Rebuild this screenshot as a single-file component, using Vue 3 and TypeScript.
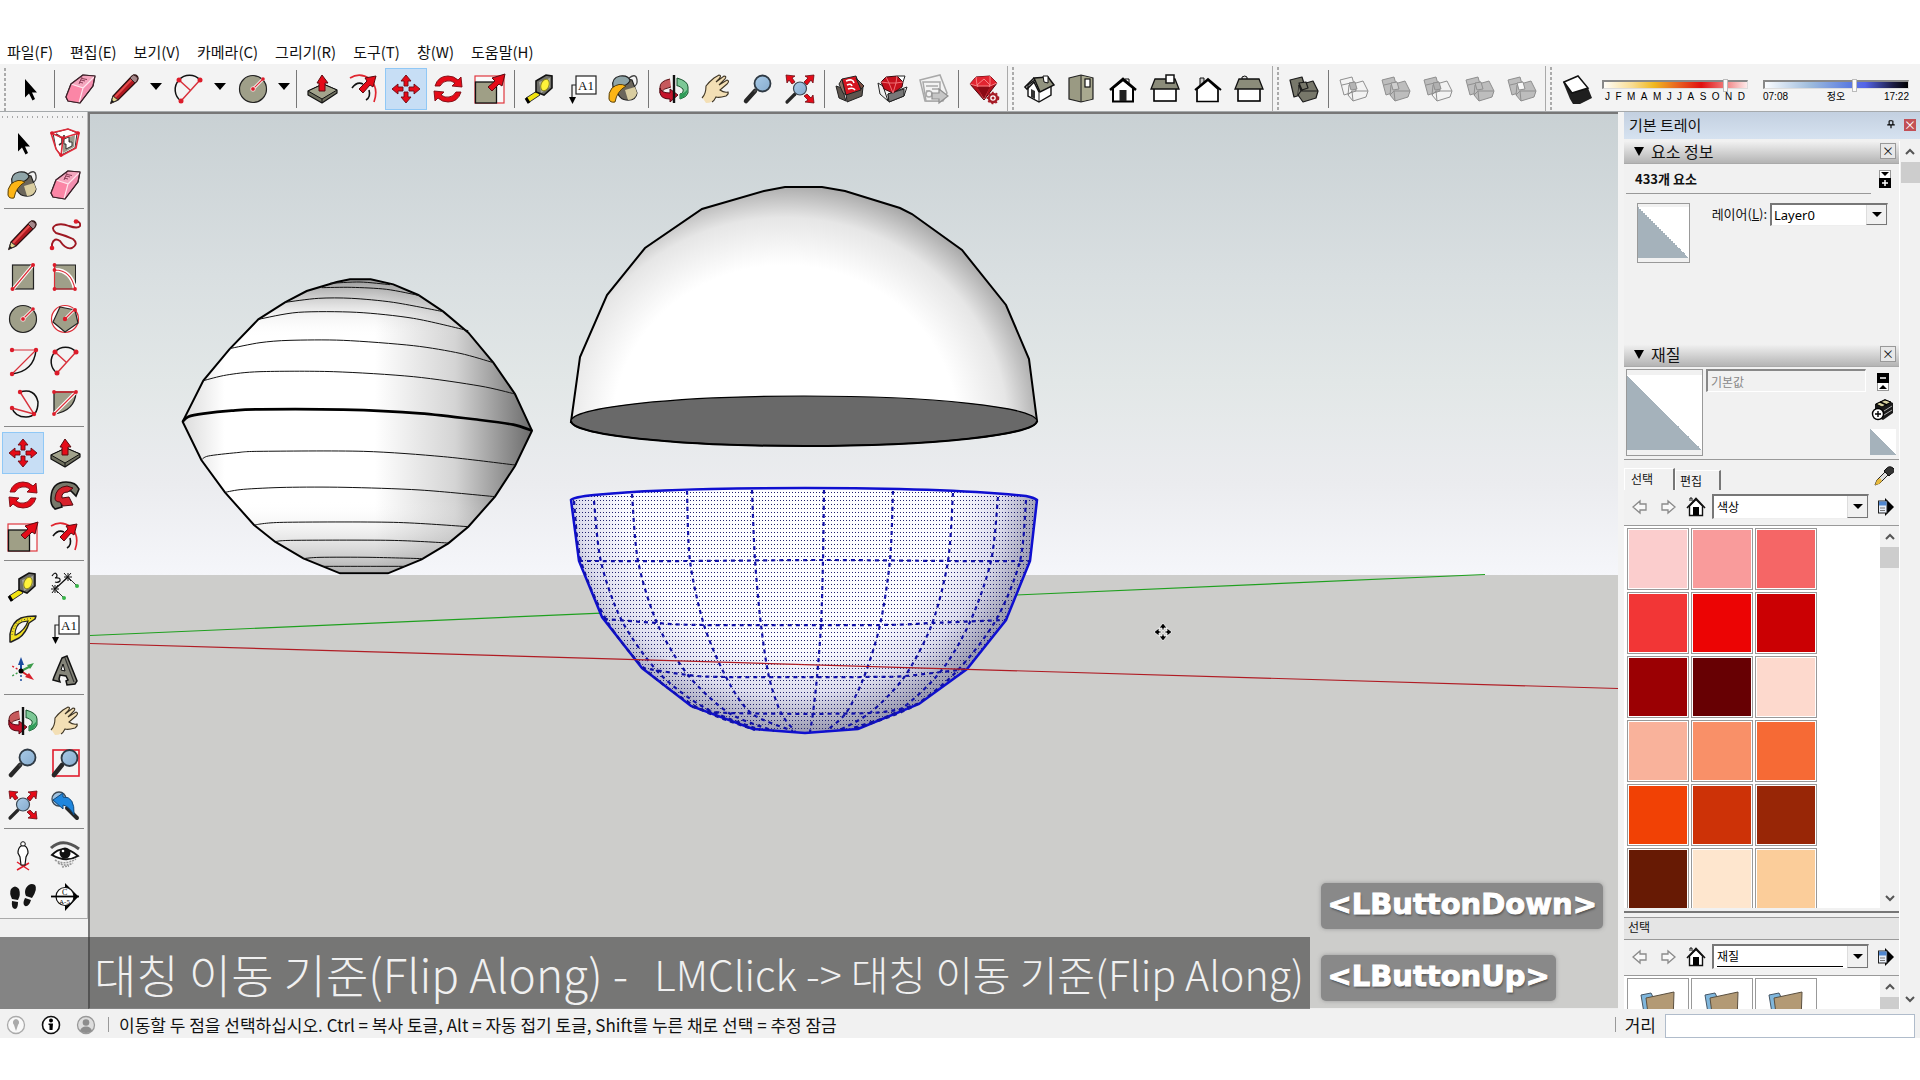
<script setup lang="ts">
import { ref } from 'vue'

interface Tool {
  id: string
  label: string
  drop?: boolean
  active?: boolean
}

const menus: string[] = ['파일(F)', '편집(E)', '보기(V)', '카메라(C)', '그리기(R)', '도구(T)', '창(W)', '도움말(H)']

const mainGroups: Tool[][] = [
  [{ id: 'select', label: '선택' }],
  [
    { id: 'eraser', label: '지우개' },
    { id: 'pencil', label: '선', drop: true },
    { id: 'arc2', label: '호', drop: true },
    { id: 'circle', label: '원', drop: true },
  ],
  [
    { id: 'pushpull', label: '밀기/끌기' },
    { id: 'offset', label: '오프셋' },
    { id: 'move', label: '이동', active: true },
    { id: 'rotate', label: '회전' },
    { id: 'scale', label: '배율' },
  ],
  [
    { id: 'tape', label: '줄자' },
    { id: 'text', label: '텍스트' },
    { id: 'paint', label: '페인트통' },
  ],
  [
    { id: 'orbit', label: '궤도' },
    { id: 'pan', label: '이동 보기' },
    { id: 'zoom', label: '확대/축소' },
    { id: 'extents', label: '범위 확대' },
  ],
  [
    { id: 'warehouse', label: '3D Warehouse' },
    { id: 'extbox', label: '확장 프로그램' },
    { id: 'layout', label: 'LayOut' },
  ],
  [{ id: 'rubygear', label: '확장 관리자' }],
]

const viewTools: Tool[] = [
  { id: 'iso', label: '등각' },
  { id: 'top', label: '평면' },
  { id: 'front', label: '정면' },
  { id: 'right', label: '우측면' },
  { id: 'back', label: '후면' },
  { id: 'left', label: '좌측면' },
]

const solids = [
  { label: '교차', a: 'none', b: 'none', i: '#b4b4b4' },
  { label: '결합', a: '#bdbdbd', b: '#bdbdbd', i: '#cfcfcf' },
  { label: '빼기', a: '#bdbdbd', b: 'none', i: '#b0b0b0' },
  { label: '자르기', a: '#bdbdbd', b: '#bdbdbd', i: '#bdbdbd' },
  { label: '분할', a: '#bdbdbd', b: '#bdbdbd', i: '#f8f8f8' },
]

const sideGroups: Tool[][] = [
  [
    { id: 'select', label: '선택' },
    { id: 'component', label: '구성요소' },
    { id: 'paint', label: '페인트통' },
    { id: 'eraser', label: '지우개' },
  ],
  [
    { id: 'pencil', label: '선' },
    { id: 'freehand', label: '자유곡선' },
    { id: 'rect', label: '직사각형' },
    { id: 'rotrect', label: '회전 직사각형' },
    { id: 'circle', label: '원' },
    { id: 'polygon', label: '다각형' },
    { id: 'arc', label: '호' },
    { id: 'arc2', label: '2점 호' },
    { id: 'arc3', label: '3점 호' },
    { id: 'pie', label: '파이' },
  ],
  [
    { id: 'move', label: '이동', active: true },
    { id: 'pushpull', label: '밀기/끌기' },
    { id: 'rotate', label: '회전' },
    { id: 'follow', label: '따라가기' },
    { id: 'scale', label: '배율' },
    { id: 'offset', label: '오프셋' },
  ],
  [
    { id: 'tape', label: '줄자' },
    { id: 'dimension', label: '치수' },
    { id: 'protractor', label: '각도기' },
    { id: 'text', label: '텍스트' },
    { id: 'axes', label: '축' },
    { id: 'text3d', label: '3D 텍스트' },
  ],
  [
    { id: 'orbit', label: '궤도' },
    { id: 'pan', label: '이동 보기' },
    { id: 'zoom', label: '확대/축소' },
    { id: 'zoomwin', label: '창 확대' },
    { id: 'extents', label: '범위 확대' },
    { id: 'previous', label: '이전' },
  ],
  [
    { id: 'camera', label: '카메라 배치' },
    { id: 'look', label: '둘러보기' },
    { id: 'walk', label: '걷기' },
    { id: 'section', label: '단면' },
  ],
]

const months: string[] = ['J', 'F', 'M', 'A', 'M', 'J', 'J', 'A', 'S', 'O', 'N', 'D']
const month = ref(86)
const time = ref(63)

const colors: string[] = [
  '#fbcdcd', '#f99b9b', '#f56666',
  '#f23636', '#ec0404', '#cb0003',
  '#9b0003', '#670003', '#fdd9cd',
  '#f9b29b', '#f99068', '#f66a35',
  '#f14105', '#cd3207', '#982606',
  '#671a04', '#fee6ce', '#fbcd9a',
]

const spinOutline =
  'M68 485L130 362L208 268L295 178L375 127L440 93L530 66L570 58H632L700 73L775 105L850 155L925 218L1000 308L1065 402L1116 512L1065 618L1005 710L925 800L865 850L785 898L684 940H540L430 895L345 845L282 795L195 697L124 600Z'

const bowlOutline =
  'M571 500Q574 497 594 495Q660 488 805 488Q950 488 1026 496Q1035 498 1037 500L1030 561L1006 620L967 669L919 704L858 729L805 733L753 729L691 706L642 668L602 617L579 561Z'

const meridians: string[] = [
  '574,501 581,561 607,621 647,671 700,709 755,730',
  '594,501 601,562 622,621 659,673 705,708 760,730',
  '632,494 638,561 657,623 688,675 729,713 774,731',
  '687,491 690,561 704,625 726,677 751,713 793,731',
  '752,490 755,560 761,625 769,677 781,713 795,731',
  '824,490 823,560 821,625 817,677 813,713 810,732',
  '893,491 890,560 880,625 864,677 846,713 826,731',
  '953,493 948,561 932,624 905,676 871,712 840,730',
  '998,497 991,561 970,622 941,671 898,711 850,729',
  '1026,500 1020,561 996,620 957,671 912,707 855,729',
]

const rings: string[] = [
  '579,561 690,561 823,560 948,561 1030,561',
  '604,619 657,623 704,625 880,625 932,623 1005,620',
  '642,668 688,675 726,677 864,677 905,676 966,669',
  '692,707 729,713 871,713 918,704',
]

const contours: string[] = [
  '510,70 600,66 690,74',
  '485,83 575,82 680,88 780,107',
  '375,127 475,115 575,115 700,127 850,155',
  '295,178 415,157 590,157 760,175 925,212',
  '208,266 300,248 390,241 550,241 760,257 900,280 1000,308',
  '130,362 200,345 300,335 520,335 760,350 960,378 1065,402',
  '124,600 145,588 230,578 300,574 610,574 850,590 1065,615',
  '195,697 250,688 380,682 555,682 780,690 1005,710',
  '282,795 370,787 700,787 925,800',
  '345,845 400,841 690,841 865,849',
  '430,896 480,892 630,892 790,896',
  '488,919 735,919',
]
const equator = '68,485 85,470 130,461 215,452 300,448 550,449 780,460 960,480 1060,494 1116,512'

// Catmull-Rom spline through the listed points, as a cubic path
function smooth(list: string): string {
  const p = list.split(' ').map((s) => s.split(',').map(Number))
  let d = `M${p[0][0]} ${p[0][1]}`
  for (let i = 0; i < p.length - 1; i++) {
    const a = p[Math.max(i - 1, 0)]
    const b = p[i]
    const c = p[i + 1]
    const e = p[Math.min(i + 2, p.length - 1)]
    const k = 7
    d += `C${b[0] + (c[0] - a[0]) / k} ${b[1] + (c[1] - a[1]) / k} ${c[0] - (e[0] - b[0]) / k} ${c[1] - (e[1] - b[1]) / k} ${c[0]} ${c[1]}`
  }
  return d
}
</script>

<template>
  <div class="app">
    <svg class="symbols" aria-hidden="true">
      <symbol id="i-select" viewBox="0 0 32 32"><path d="M11 6V24.500L15 20.500L18.500 27.500L21 26L18 19.500H23Z" fill="#000" /></symbol>
      <symbol id="i-eraser" viewBox="0 0 32 32">
        <path d="M2 24L7 11L19 2L31 3L29 13L16 30L4 28Z" fill="#f48fb0" stroke="#3a2028" stroke-width="1.200" stroke-linejoin="round" />
        <path d="M7 11L19 2L31 3L19 15Z" fill="#f5a6be" /><path d="M2 24L7 11L19 15L15 30L4 28Z" fill="#fb86a6" />
        <path d="M7 11L19 15L15 30M19 15L31 3" fill="none" stroke="#ffe4ec" stroke-width="1.200" />
        <path d="M2 24L7 11L19 2L31 3L29 13L16 30L4 28Z" fill="none" stroke="#3a2028" stroke-width="1.200" stroke-linejoin="round" />
        <path d="M15 9l4 1M17 7l4 1M18 5.500l5 1M15 11l3-7" stroke="#8a3d56" stroke-width="1" />
      </symbol>
      <symbol id="i-pencil" viewBox="0 0 32 32">
        <path d="M2 30L4 23L23 3Q26 1 28 3T28 8L9 27Z" fill="#b01820" stroke="#2a1010" stroke-width="1.300" />
        <path d="M6 24L23 6" stroke="#e34b4b" stroke-width="2" /><path d="M2 30L4 23L9 27Z" fill="#e5d58e" stroke="#333" /><path d="M2 30L3 27L5 28.500Z" fill="#111" />
        <path d="M21 5L26 10L28 8Q30 5 27 3T23 3Z" fill="#a4878a" stroke="#3a2020" />
      </symbol>
      <symbol id="i-arc2" viewBox="0 0 32 32">
        <path d="M8 28A14 14 0 0 1 6 7A14 14 0 0 1 27 7" fill="none" stroke="#111" stroke-width="1.500" />
        <path d="M6 7L17 17M27 7L8 28" stroke="#d8323c" stroke-width="1.500" /><g fill="#dc1c2a"><circle cx="6" cy="7" r="2.500" /><circle cx="27" cy="7" r="2.500" /><circle cx="8" cy="28" r="2.500" /></g>
      </symbol>
      <symbol id="i-circle" viewBox="0 0 32 32">
        <circle cx="16" cy="16" r="13.500" fill="#9f9f89" stroke="#222" stroke-width="1.200" />
        <path d="M16 16L26 6" stroke="#fff" stroke-width="3" /><path d="M16 16L26 6" stroke="#dc2c36" stroke-width="1.200" />
        <circle cx="16" cy="16" r="2.300" fill="#dc1c2a" stroke="#fff" stroke-width=".7" /><circle cx="26" cy="6" r="1.800" fill="#dc1c2a" />
      </symbol>
      <symbol id="i-pushpull" viewBox="0 0 32 32">
        <path d="M2 18L17 11L31 17V20L16 30L2 22Z" fill="#6f705f" stroke="#111" stroke-width="1.200" stroke-linejoin="round" /><path d="M2 18L17 11L31 17L16 26Z" fill="#a2a38c" stroke="#111" stroke-width="1" /><path d="M16 26V30" stroke="#111" />
        <path d="M13 18V10H11L16 2L22 10H19V18Z" fill="#e50b18" stroke="#5b0a10" />
      </symbol>
      <symbol id="i-offset" viewBox="0 0 32 32">
        <path d="M2 5Q12-1 22 6Q31 15 26 29" fill="none" stroke="#e0252f" stroke-width="1.700" /><path d="M4 15Q9 8 15 11M21 17Q23 24 18 27" fill="none" stroke="#111" stroke-width="1.600" />
        <path d="M11 16L19 8L17 5L28 3L25 14L22 12L15 20Z" fill="#e50b18" stroke="#5b0a10" stroke-width="1" />
      </symbol>
      <symbol id="i-move" viewBox="0 0 32 32">
        <g fill="#e50b18" stroke="#6b0a12" stroke-width=".9"><path d="M16 2L21 8H18V13H14V8H11Z" /><path d="M16 30L21 24H18V19H14V24H11Z" /><path d="M2 16L8 11V14H13V18H8V21Z" /><path d="M30 16L24 11V14H19V18H24V21Z" /></g>
      </symbol>
      <symbol id="i-rotate" viewBox="0 0 32 32">
        <g fill="#e50b18" stroke="#7b0a12" stroke-width=".9"><path d="M3 13Q6 3 16 3Q22 3 26 7L29 4L30 14L20 13L23 10Q19 7 15 8Q11 8 8 13Z" /><path d="M29 19Q26 29 16 29Q10 29 6 25L3 28L2 18L12 19L9 22Q13 25 17 24Q21 24 24 19Z" /></g>
      </symbol>
      <symbol id="i-scale" viewBox="0 0 32 32">
        <rect x="1" y="3" width="29" height="27" fill="#fff" fill-opacity=".5" stroke="#e0383f" stroke-width="1.200" /><rect x="1.500" y="9" width="21" height="21" fill="#9f9f86" stroke="#111" stroke-width="1.300" />
        <path d="M14 14L21 8L18 5L31 1L28 13L25 11L18 18Z" fill="#e50b18" stroke="#5b0a10" stroke-width="1" />
      </symbol>
      <symbol id="i-tape" viewBox="0 0 32 32">
        <path d="M4 30L2 25L13 18L16 22Z" fill="#f2e311" stroke="#333" /><path d="M2 25L5 30" stroke="#000" stroke-width="3" />
        <path d="M12 8L22 2L28 3L28 15L20 22L12 19Z" fill="#6e6e68" stroke="#111" stroke-width="1.600" /><path d="M15 9L26 5V14L17 20Z" fill="#a8a8a0" /><ellipse cx="21" cy="12" rx="4" ry="6" transform="rotate(20 21 12)" fill="#fff23a" stroke="#8a8420" />
      </symbol>
      <symbol id="i-text" viewBox="0 0 32 32">
        <rect x="10" y="3" width="20" height="18" fill="#fff" stroke="#222" stroke-width="1.200" /><path d="M10 12H6V25" fill="none" stroke="#222" stroke-width="1.200" /><path d="M3 24H10L6.500 31Z" fill="#000" /><text x="12" y="17" font-size="13" font-family="Liberation Serif, serif" fill="#111">A1</text>
      </symbol>
      <symbol id="i-paint" viewBox="0 0 32 32">
        <path d="M20 6Q28-1 29 7Q30 12 25 14" fill="none" stroke="#444" stroke-width="1.300" /><path d="M12 4L24 7L29 20Q28 28 18 27Q9 26 8 12Z" fill="#6b665b" stroke="#222" stroke-width="1.200" /><path d="M17 17L27 14L29 20Q27 27 20 27Z" fill="#d9cda0" />
        <path d="M5 14Q3 5 12 3Q21 2 22 8Q18 14 10 13Z" fill="#8fa5a8" stroke="#222" stroke-width="1.200" /><path d="M4 15Q11 9 18 13Q9 18 7 29Q2 30 1 26Q0 20 4 15Z" fill="#fdb515" stroke="#57400c" stroke-width="1" />
      </symbol>
      <symbol id="i-orbit" viewBox="0 0 32 32">
        <path d="M12 6Q2 8 2 14V20Q6 15 13 14" fill="#c65a5c" stroke="#5b1518" /><path d="M19 5Q30 8 30 14V20Q29 24 22 26V21Q26 20 25 16Q20 12 19 13Z" fill="#7cc896" stroke="#17532c" /><path d="M30 15Q29 24 22 26V21Q28 20 30 15Z" fill="#2e9c58" />
        <path d="M2 15Q3 20 12 20V16L20 22L12 29V26Q3 26 2 20Z" fill="#c5142b" stroke="#560914" /><path d="M16 2V30" stroke="#111" stroke-width="2.400" />
      </symbol>
      <symbol id="i-pan" viewBox="0 0 32 32">
        <path d="M2 24Q6 21 6 13Q9 9 14 5L19 2Q22 2 19 6L16 9L24 3Q27 3 25 6L19 12L27 7Q30 8 27 11L20 17Q24 20 28 19Q29 21 26 23Q19 25 16 24Q13 30 6 30Z" fill="#f3dfb5" /><path d="M2 25Q6 21 6 13Q9 9 14 5L19 2Q22 2 19 6L16 9L24 3Q27 3 25 6L19 12L27 7Q30 8 27 11L20 17Q24 20 28 19Q29 21 26 23Q19 25 16 24Q14 28 12 29" fill="none" stroke="#3d3424" stroke-width="1.100" />
      </symbol>
      <symbol id="i-zoom" viewBox="0 0 32 32"><path d="M4 28L13 18" stroke="#272727" stroke-width="4.500" stroke-linecap="round" /><path d="M12 19L16 15" stroke="#444" stroke-width="2" /><circle cx="20.500" cy="10.500" r="8" fill="url(#lens)" stroke="#2f3a44" stroke-width="1.800" /></symbol>
      <symbol id="i-extents" viewBox="0 0 32 32">
        <path d="M3 29L11 21" stroke="#272727" stroke-width="3.200" stroke-linecap="round" /><circle cx="16" cy="15.500" r="6.500" fill="url(#lens)" stroke="#3c4853" stroke-width="1.200" />
        <g fill="#e50b18" stroke="#6b0a12" stroke-width=".8"><path d="M2 2L11 3L8 5L11 9L8 11L5 7L3 10Z" /><path d="M30 2L21 3L24 5L20 9L23 12L27 7L29 10Z" /><path d="M30 30L21 29L24 27L20 23L23 21L27 25L29 22Z" /></g>
      </symbol>
      <symbol id="i-warehouse" viewBox="0 0 32 32">
        <path d="M2 13L8 15L12 28L5 25ZM12 20L29 14L28 23L13 29Z" fill="#5d554e" stroke="#222" /><path d="M5 11L8 6L12 22L9 20Z" fill="#8c7466" stroke="#222" /><path d="M8 6L22 3L27 17L12 22Z" fill="#d5141f" stroke="#222" /><path d="M12 8Q19 5 20 10M13 12Q17 10 18 13M14 16Q19 14 21 17" fill="none" stroke="#fff" stroke-width="1.600" /><path d="M22 5L30 13L27 16Z" fill="#7a4c40" stroke="#222" />
      </symbol>
      <symbol id="i-extbox" viewBox="0 0 32 32">
        <path d="M2 10L7 13L12 28L4 21ZM12 21L31 14L28 23L13 29Z" fill="#eee" stroke="#222" /><path d="M12 21L28 16V23L13 29Z" fill="#777" stroke="#222" /><path d="M21 3L29 3L27 9" fill="#fff" stroke="#222" /><path d="M5 9L10 4L21 3L27 9L26 14L17 20L8 16Z" fill="#c5101c" stroke="#3b0a0e" /><path d="M5 9L13 10L17 20L20 10L27 9M10 4L13 10L20 10L21 3" fill="none" stroke="#f47a80" stroke-width=".9" />
      </symbol>
      <symbol id="i-layout" viewBox="0 0 32 32">
        <g fill="#f3f3f3" stroke="#a9a9a9" stroke-width="1.500"><path d="M2 7L22 2L29 20L25 28H7Z" /><path d="M5 9H22V28H8Z" /><path d="M8 13H20M8 18H12M14 16H21" /><circle cx="11" cy="21" r="3" /></g><path d="M14 20H21V16L30 23L21 30V26H14Z" fill="#c6c6c6" stroke="#8f8f8f" stroke-width="1.200" />
      </symbol>
      <symbol id="i-rubygear" viewBox="0 0 32 32">
        <path d="M2 11L8 4L22 3L29 10L16 27Z" fill="#b0101c" stroke="#4d060c" /><path d="M2 11L8 4L22 3L29 10L22 13H9Z" fill="#e22430" /><path d="M9 12L16 6L22 12L16 26ZM2 11L9 13H22L29 10M8 4L9 12M22 3V12" fill="none" stroke="#ff9a9a" stroke-width=".8" /><path d="M9 14H22L16 26Z" fill="#8b0a14" />
        <circle cx="25" cy="25" r="4" fill="#fff" stroke="#a61c26" stroke-width="2.400" /><circle cx="25" cy="25" r="5.500" fill="none" stroke="#a61c26" stroke-width="1.600" stroke-dasharray="2 2" /><circle cx="25" cy="25" r="1.500" fill="#a61c26" />
      </symbol>
      <symbol id="i-iso" viewBox="0 0 32 32">
        <path d="M5 12V23L16 29L28 22V11L20 15L12 7Z" fill="#fff" stroke="#111" stroke-width="1.400" /><path d="M16 18V29" stroke="#111" /><path d="M11 5L25 4L31 12L17 19Z" fill="#92937f" stroke="#111" stroke-width="1.500" /><path d="M11 5L2 14L4 16L11 9L16 19" fill="none" stroke="#111" stroke-width="1.600" /><path d="M8 16L12 18V26L8 24Z" fill="#333" /><path d="M20 3H25V10L21 9Z" fill="#fff" stroke="#111" />
      </symbol>
      <symbol id="i-top" viewBox="0 0 32 32"><path d="M4 5L16 2L28 5V26L16 29L4 26Z" fill="#9a9a83" stroke="#222" stroke-width="1.200" /><path d="M16 2V29" stroke="#222" /><path d="M17 3L27 5V26L17 28Z" fill="#a9a98f" /><rect x="20" y="6" width="5" height="8" fill="#fff" stroke="#111" stroke-width="1.200" /></symbol>
      <symbol id="i-front" viewBox="0 0 32 32"><path d="M6 15V28.500H26V15L16 7Z" fill="#fff" stroke="#000" stroke-width="2" /><path d="M18 6H22V11" fill="#fff" stroke="#000" /><path d="M3 17L16 6L29 17" fill="none" stroke="#000" stroke-width="2.600" /><rect x="12.500" y="17" width="7" height="11" fill="#222" /></symbol>
      <symbol id="i-right" viewBox="0 0 32 32"><rect x="5" y="15" width="22" height="13" fill="#fff" stroke="#000" stroke-width="1.600" /><path d="M6 6H26L30 16H2Z" fill="#8b8c7a" stroke="#111" stroke-width="1.300" /><rect x="17" y="2" width="8" height="8" fill="#fff" stroke="#111" stroke-width="1.500" /></symbol>
      <symbol id="i-back" viewBox="0 0 32 32"><path d="M9 5H13V12L9 14Z" fill="#ccc" stroke="#111" /><path d="M6 16V28.500H27V16L17 7Z" fill="#fff" stroke="#000" stroke-width="1.700" /><path d="M4 17L17 6L30 17" fill="none" stroke="#000" stroke-width="1.900" /></symbol>
      <symbol id="i-left" viewBox="0 0 32 32"><path d="M9 6V4Q12 2 14 4V6" fill="#ddd" stroke="#111" /><rect x="5" y="15" width="22" height="13" fill="#fff" stroke="#000" stroke-width="1.600" /><path d="M6 6H26L30 16H2Z" fill="#8b8c7a" stroke="#111" stroke-width="1.300" /></symbol>
      <symbol id="i-component" viewBox="0 0 32 32"><path d="M4 6L19 2L28 6L26 21L12 28L7 22Z" fill="#fff" stroke="#333" /><path d="M13 13L26 8L25 20L14 26Z" fill="#9b9c8e" /><path d="M7 7L13 11V16L10 18M15 8V14H20V18" fill="none" stroke="#333" stroke-width="1.600" /><path d="M15 12L20 10V15H23V19L17 22V17H15Z" fill="#fff" stroke="#333" /><path d="M2 6L19 2L30 6L27 21L12 29L7 22ZM2 6L14 11L30 6M14 11L12 29" fill="none" stroke="#e02c3a" stroke-width="1.600" /><g fill="#d91c2c"><circle cx="3" cy="6" r="1.800" /><circle cx="14" cy="11" r="1.800" /><circle cx="29" cy="6" r="1.800" /><circle cx="12" cy="28" r="1.800" /></g></symbol>
      <symbol id="i-freehand" viewBox="0 0 32 32"><path d="M3 29V25Q5 18 11 22Q17 31 23 29Q30 25 24 20Q15 16 7 14Q1 9 7 6Q13 4 20 7Q29 10 31 7Q32 3 27 2" fill="none" stroke="#9e1822" stroke-width="1.900" /><circle cx="3" cy="29" r="2.300" fill="#dc1c2a" /><circle cx="27" cy="2.500" r="2.300" fill="#dc1c2a" /></symbol>
      <symbol id="i-rect" viewBox="0 0 32 32"><rect x="5.500" y="4" width="21" height="24" fill="#9f9f89" stroke="#222" stroke-width="1.200" /><path d="M6 28L26 4" stroke="#fff" stroke-width="3.500" /><path d="M6 28L26 4" stroke="#dc2c36" stroke-width="1.200" /><circle cx="5.500" cy="28" r="2" fill="#dc1c2a" /><circle cx="26" cy="4" r="2" fill="#dc1c2a" /></symbol>
      <symbol id="i-rotrect" viewBox="0 0 32 32"><rect x="5.500" y="4" width="21" height="24" fill="#9f9f89" stroke="#222" stroke-width="1" /><path d="M6 9Q22 9 26 28" fill="none" stroke="#fff" stroke-width="4" /><path d="M5.500 4V28H26Q22 9 6 9" fill="none" stroke="#dc2c36" stroke-width="1.200" /><g fill="#dc1c2a"><circle cx="5.500" cy="4" r="1.900" /><circle cx="5.500" cy="9" r="1.900" /><circle cx="5.500" cy="28" r="1.900" /><circle cx="26" cy="28" r="1.900" /></g></symbol>
      <symbol id="i-polygon" viewBox="0 0 32 32"><circle cx="16" cy="16" r="13.500" fill="#fff" stroke="#dc2c36" stroke-width="1.200" /><path d="M11 4L26 7L29 20L16 29L4 19Z" fill="#9f9f89" stroke="#222" stroke-width="1.200" /><path d="M16 16L26 6" stroke="#fff" stroke-width="3" /><path d="M16 16L26 6" stroke="#dc2c36" stroke-width="1.200" /><circle cx="16" cy="16" r="2.200" fill="#dc1c2a" /><circle cx="26" cy="7" r="2" fill="#dc1c2a" /></symbol>
      <symbol id="i-arc" viewBox="0 0 32 32"><path d="M29 5Q27 26 5 29" fill="none" stroke="#111" stroke-width="1.500" /><path d="M5 29L29 5H5" fill="none" stroke="#d8323c" stroke-width="1.200" /><g fill="#dc1c2a"><circle cx="5" cy="5" r="2.200" /><circle cx="29" cy="5" r="2.200" /><circle cx="5" cy="29" r="2.200" /></g></symbol>
      <symbol id="i-arc3" viewBox="0 0 32 32"><path d="M13 5Q28 1 31 15Q31 30 19 30Q8 30 5 21" fill="none" stroke="#111" stroke-width="1.500" /><path d="M13 5L27 27L5 21" fill="none" stroke="#d8323c" stroke-width="1.400" /><g fill="#dc1c2a"><circle cx="13" cy="5" r="2.200" /><circle cx="27" cy="27" r="2.200" /><circle cx="5" cy="21" r="2.200" /></g></symbol>
      <symbol id="i-pie" viewBox="0 0 32 32"><path d="M5 5H27Q26 24 5 27Z" fill="#9f9f89" stroke="#222" stroke-width="1.300" /><path d="M5 27L27 5" stroke="#fff" stroke-width="3.500" /><path d="M5 27L27 5H5" fill="none" stroke="#dc2c36" stroke-width="1.300" /><g fill="#dc1c2a"><circle cx="5" cy="5" r="1.900" /><circle cx="27" cy="5" r="1.900" /><circle cx="5" cy="27" r="1.900" /></g></symbol>
      <symbol id="i-follow" viewBox="0 0 32 32"><path d="M2 18Q3 3 17 3Q27 3 30 10L27 17L22 12Q12 10 11 18L13 28L6 30Q1 26 2 18Z" fill="#77786a" stroke="#111" stroke-width="1.600" /><path d="M6 19Q7 8 18 7L24 9L19 13Q12 13 13 19L20 18L24 26L14 27L11 23Q6 23 6 19Z" fill="#d6202a" stroke="#4d0a0f" /></symbol>
      <symbol id="i-dimension" viewBox="0 0 32 32"><path d="M6 18L19 6" stroke="#111" stroke-width="1.300" /><path d="M3 14L9 22M2 18H10M6 14V22M15 2L22 10M15 6H23M19 2V10M22 2L15 10M9 14L3 22" stroke="#111" stroke-width="1" /><path d="M6 18L15 27M19 6L28 15" stroke="#333" /><circle cx="15" cy="27" r="2" fill="#38b54a" /><circle cx="28" cy="15" r="2" fill="#38b54a" /><path d="M3 5Q6 0 8 4Q8 7 6 7Q12 6 11 10Q9 12 6 11" fill="none" stroke="#111" stroke-width="1.200" /></symbol>
      <symbol id="i-protractor" viewBox="0 0 32 32"><path d="M3 29V21Q5 9 14 5Q20 3 29 3L28 6L22 10Q19 20 12 25L4 29Z" fill="#f1df22" stroke="#222" stroke-width="1.500" stroke-linejoin="round" /><path d="M8 22Q8 12 15 9L21 8Q18 17 9 22Z" fill="#f5f5f5" stroke="#222" stroke-width="1.200" /><path d="M5 22Q7 10 15 7L26 5" fill="none" stroke="#444" stroke-dasharray="1 2" /></symbol>
      <symbol id="i-axes" viewBox="0 0 32 32"><g stroke-width="1.500" fill="none"><path d="M14 16V8" stroke="#1b4ca0" stroke-width="2" /><path d="M14 16L24 11" stroke="#3d9c4b" stroke-width="2" /><path d="M14 16L23 22" stroke="#d8202c" stroke-width="2" /><path d="M14 16L5 11" stroke="#d8202c" stroke-dasharray="2 2" /><path d="M14 16L5 21" stroke="#3d9c4b" stroke-dasharray="2 2" /><path d="M14 16V28" stroke="#1b4ca0" stroke-dasharray="2 2" /></g><path d="M14 2L17 10H11Z" fill="#1b4ca0" /><path d="M27 8L23 14L20 10Z" fill="#3d9c4b" /><path d="M27 25L18 22L22 18Z" fill="#d8202c" /><circle cx="14" cy="16" r="2.500" fill="#000" /></symbol>
      <symbol id="i-text3d" viewBox="0 0 32 32"><path d="M13 3L18 1L28 26L26 29L18 30L17 26L19 25L17 21L11 20L10 24L11 27L4 25L5 22Z" fill="#85857a" stroke="#111" stroke-width="1.500" /><path d="M14 9L16 16L12 15Z" fill="#f3f3f3" stroke="#111" /><path d="M16 3L25 27" stroke="#333" stroke-width="1.200" /></symbol>
      <symbol id="i-zoomwin" viewBox="0 0 32 32"><rect x="4" y="3" width="26" height="26" fill="none" stroke="#e01c2c" stroke-width="1.600" /><path d="M5 28L13 18" stroke="#272727" stroke-width="4.500" stroke-linecap="round" /><circle cx="20.500" cy="11" r="8" fill="url(#lens)" stroke="#2f3a44" stroke-width="1.800" /></symbol>
      <symbol id="i-previous" viewBox="0 0 32 32"><path d="M18 19L28 29" stroke="#272727" stroke-width="4" stroke-linecap="round" /><circle cx="10" cy="10" r="7" fill="url(#lens)" stroke="#3c4853" stroke-width="1.300" /><path d="M4 11L14 4V8Q26 7 25 26Q20 17 14 16V20Z" fill="#1f86dd" stroke="#124a7c" /></symbol>
      <symbol id="i-camera" viewBox="0 0 32 32"><path d="M10 23L22 31M22 24L10 31" stroke="#e01c2c" stroke-width="1.500" /><circle cx="16" cy="5" r="2.300" fill="#fff" stroke="#111" /><path d="M14 7Q11 9 11 14L13 18L14 26H18L19 18L21 14Q21 9 18 7Z" fill="#fff" stroke="#111" stroke-width="1.200" /></symbol>
      <symbol id="i-look" viewBox="0 0 32 32"><path d="M2 9Q14-2 30 10" fill="none" stroke="#555" stroke-width="3" /><path d="M3 16Q14 4 29 17Q17 24 3 16Z" fill="#fff" stroke="#111" stroke-width="2" /><circle cx="16" cy="14" r="5.500" fill="#111" /><circle cx="14" cy="12" r="1.300" fill="#fff" /><path d="M6 21Q15 27 27 20M9 24Q16 28 24 24M13 28L20 27" fill="none" stroke="#9a9a9a" stroke-width="1.600" stroke-dasharray="2 1" /></symbol>
      <symbol id="i-walk" viewBox="0 0 32 32"><path d="M4 8Q8 3 12 8Q14 14 11 19L5 18Q2 12 4 8ZM5 20L11 21Q11 28 8 28Q4 27 5 20ZM19 7Q23 1 28 4Q31 8 25 17L19 15Q17 11 19 7ZM18 17L24 19Q22 26 18 25Q15 23 18 17Z" fill="#151515" /></symbol>
      <symbol id="i-section" viewBox="0 0 32 32"><path d="M16 2L29 15H16ZM16 30L29 16H16Z" fill="#000" /><circle cx="16" cy="15.500" r="9" fill="#fff" stroke="#111" stroke-width="1.200" /><path d="M2 15.500H30" stroke="#000" stroke-width="1.800" /><text x="13" y="14" font-size="8" font-family="Liberation Serif, serif">C</text><text x="10" y="23" font-size="7" font-family="Liberation Serif, serif">A-5</text></symbol>
      <symbol id="i-home" viewBox="0 0 20 20"><path d="M4 4V1H6V4" fill="none" stroke="#111" /><path d="M3.500 9V18.500H16.500V9L10 2.500Z" fill="#fff" stroke="#111" stroke-width="1.400" /><path d="M1 11L10 1.500L19 11" fill="none" stroke="#111" stroke-width="1.600" /><rect x="7" y="10" width="6" height="8" fill="#000" /></symbol>
      <symbol id="i-prev" viewBox="0 0 16 16"><path d="M1 8L8 2V5H14V11H8V14Z" fill="#f8f8f8" stroke="#8a8a8a" stroke-width="1.300" /></symbol>
      <symbol id="i-next" viewBox="0 0 16 16"><path d="M15 8L8 2V5H2V11H8V14Z" fill="#f8f8f8" stroke="#8a8a8a" stroke-width="1.300" /></symbol>
      <symbol id="i-detail" viewBox="0 0 18 18"><path d="M8 0L17 9L8 18Z" fill="#000" /><rect x="1.500" y="3" width="8.500" height="12" fill="#e8eef8" stroke="#222" /><rect x="2" y="3.500" width="7.500" height="4" fill="#4f86cf" /><path d="M3 10H8M3 12.500H8" stroke="#777" /></symbol>
      <symbol id="i-up" viewBox="0 0 12 12"><path d="M2 8L6 4L10 8" fill="none" stroke="#555" stroke-width="2" /></symbol>
      <symbol id="i-down" viewBox="0 0 12 12"><path d="M2 4L6 8L10 4" fill="none" stroke="#555" stroke-width="2" /></symbol>
      <symbol id="i-folder" viewBox="0 0 40 40"><path d="M3 6L13 4L15 8L34 6V36H8Z" fill="#7fb6dc" stroke="#456" /><path d="M8 9L36 3L35 34L12 40Z" fill="#b39a75" stroke="#5b5040" /></symbol>
    </svg>

    <nav class="menubar" aria-label="메뉴">
      <button v-for="m in menus" :key="m" type="button">{{ m }}</button>
    </nav>

    <header class="toolbar">
      <i class="grip"></i>
      <template v-for="(group, gi) in mainGroups" :key="gi">
        <i v-if="gi > 0" class="vsep"></i>
        <template v-for="t in group" :key="t.id">
          <button type="button" class="tool" :class="{ active: t.active, split: t.drop }" :aria-label="t.label"><svg><use :href="'#i-' + t.id" /></svg></button>
          <button v-if="t.drop" type="button" class="drop" :aria-label="t.label + ' 더 보기'"></button>
        </template>
      </template>
      <i class="band"></i>
      <button v-for="t in viewTools" :key="t.id" type="button" class="tool" :aria-label="t.label"><svg><use :href="'#i-' + t.id" /></svg></button>
      <i class="band"></i>
      <button type="button" class="tool" aria-label="외부 쉘">
        <svg viewBox="0 0 32 32" fill="#77776a" stroke="#1b1b1b" stroke-width="1.200" stroke-linejoin="round"><path d="M2 7L14 4L19 20L6 24Z" /><path d="M11 12L25 8L30 18L28 25L15 29L10 22Z" /><path d="M10 22L13 18L11 12M13 18L30 18M11 10L18 9L20 15L14 17Z" /></svg>
      </button>
      <i class="vsep"></i>
      <button v-for="s in solids" :key="s.label" type="button" class="tool" :aria-label="s.label">
        <svg viewBox="0 0 32 32" stroke="#8f8f8f" stroke-linejoin="round"><path d="M2 7L14 4L18 18L6 22Z" :fill="s.a" /><path d="M11 12L25 8L30 18L28 24L15 28L10 22Z" :fill="s.b" /><path d="M10 22L14 18L30 18M14 18L15 28M4 12L17 9" fill="none" /><path d="M11 10L17 9L19 16L13 17Z" :fill="s.i" /></svg>
      </button>
      <i class="band"></i>
      <button type="button" class="tool" aria-label="그림자">
        <svg viewBox="0 0 32 32"><path d="M2 9L17 3L27 15L31 25L19 31H12L9 26Z" fill="#1f1f1f" /><path d="M3 9L17 3L27 15L11 20Z" fill="#fff" stroke="#111" stroke-width="1.500" /></svg>
      </button>
      <div class="dial">
        <input v-model="month" class="range year" type="range" min="0" max="100" aria-label="월" />
        <div class="ticks"><span v-for="(m, i) in months" :key="i">{{ m }}</span></div>
      </div>
      <div class="dial">
        <input v-model="time" class="range day" type="range" min="0" max="100" aria-label="시간" />
        <div class="ticks hours"><span>07:08</span><span>정오</span><span>17:22</span></div>
      </div>
    </header>

    <main class="work">
      <aside class="side">
        <div class="palette">
          <i class="hgrip"></i>
          <div v-for="(group, gi) in sideGroups" :key="gi" class="sgroup">
            <button v-for="t in group" :key="t.id" type="button" class="tool" :class="{ active: t.active }" :aria-label="t.label"><svg><use :href="'#i-' + t.id" /></svg></button>
          </div>
        </div>
      </aside>

      <section class="stage">
        <svg class="scene" viewBox="90 114 1528 894" preserveAspectRatio="xMidYMid slice">
          <defs>
            <linearGradient id="lens" x1="0" y1="0" x2="1" y2="1"><stop offset="0" stop-color="#a9cbe8" /><stop offset="1" stop-color="#86abcd" /></linearGradient>
            <linearGradient id="sky" gradientUnits="userSpaceOnUse" x1="0" y1="114" x2="0" y2="576"><stop offset="0" stop-color="#c9d1d4" /><stop offset=".35" stop-color="#d9dfe1" /><stop offset=".58" stop-color="#e2e7e7" /><stop offset=".8" stop-color="#ebecef" /><stop offset="1" stop-color="#f5f6fa" /></linearGradient>
            <radialGradient id="dome" gradientUnits="userSpaceOnUse" cx="0" cy="0" r="1" gradientTransform="translate(785 430) scale(262 250)"><stop offset="0" stop-color="#fff" /><stop offset=".66" stop-color="#fff" /><stop offset=".85" stop-color="#e6e6e6" /><stop offset="1" stop-color="#a2a2a2" /></radialGradient>
            <radialGradient id="bowl" gradientUnits="userSpaceOnUse" cx="0" cy="0" r="1" gradientTransform="translate(790 490) scale(258 250)"><stop offset="0" stop-color="#fff" /><stop offset=".64" stop-color="#fbfbff" /><stop offset=".82" stop-color="#dedeee" /><stop offset="1" stop-color="#8f8fa6" /></radialGradient>
            <linearGradient id="spinX" x1="0" x2="1" y1="0" y2="0"><stop offset="0" stop-color="#dcdcdc" /><stop offset=".12" stop-color="#fff" /><stop offset=".55" stop-color="#fff" /><stop offset=".78" stop-color="#d4d4d4" /><stop offset="1" stop-color="#6c6c6c" /></linearGradient>
            <linearGradient id="spinY" x1="0" x2="0" y1="0" y2="1"><stop offset="0" stop-color="#555" stop-opacity=".6" /><stop offset=".12" stop-color="#888" stop-opacity=".1" /><stop offset=".2" stop-color="#fff" stop-opacity="0" /><stop offset=".75" stop-color="#fff" stop-opacity="0" /><stop offset="1" stop-color="#666" stop-opacity=".55" /></linearGradient>
            <pattern id="dots" width="6" height="8" patternUnits="userSpaceOnUse"><path d="M0 0h1v1h-1zM3 4h1v1h-1zM3 0h1v1h-1zM0 4h1v1h-1z" fill="#22226e" /></pattern>
          </defs>
          <rect x="-400" y="0" width="2600" height="576" fill="url(#sky)" />
          <rect x="-400" y="575" width="2600" height="600" fill="#cdcdcb" />
          <path d="M90 635.500L1485 574.500" stroke="#1fa01f" stroke-width="1.200" />

          <svg x="160" y="260" width="400" height="330" viewBox="0 0 1200 990" fill="none">
            <path :d="spinOutline" fill="url(#spinX)" />
            <path :d="spinOutline" fill="url(#spinY)" stroke="#000" stroke-width="6" />
            <path v-for="c in contours" :key="c" :d="smooth(c)" stroke="#111" stroke-width="3" />
            <path :d="smooth(equator)" stroke="#000" stroke-width="8" />
          </svg>

          <path d="M571 422L580 357L607 295L645 248L702 209L764 191L785 187H822L845 191L900 208L912 214L962 250L1006 305L1029 359L1037 421Z" fill="url(#dome)" stroke="#000" stroke-width="2" />
          <ellipse cx="804" cy="421" rx="233" ry="25" fill="#696969" stroke="#000" stroke-width="1.200" />
          <path d="M571 421A233 25 0 0 0 1037 421" fill="none" stroke="#000" stroke-width="2" />

          <g stroke="#0f0fd0" fill="none">
            <path :d="bowlOutline" fill="url(#bowl)" />
            <path :d="bowlOutline" fill="url(#dots)" stroke-width="2.500" />
            <g stroke="#1212a8" stroke-width="2.200" stroke-dasharray="4 4">
              <path v-for="m in meridians" :key="m" :d="smooth(m)" />
              <path v-for="r in rings" :key="r" :d="smooth(r)" />
            </g>
          </g>
          <path d="M90 643.500L1618 688.500" stroke="#b01c24" stroke-width="1.200" />
          <g transform="translate(1163 632)" fill="#000" stroke="#fff" stroke-width=".8"><path d="M0-9L4-4H1V-2H-1V-4H-4ZM0 9L4 4H1V2H-1V4H-4ZM-9 0L-4-4V-1H-2V1H-4V4ZM9 0L4-4V-1H2V1H4V4Z" /></g>
        </svg>
        <div class="keys"><div class="key">&lt;LButtonDown&gt;</div><div class="key">&lt;LButtonUp&gt;</div></div>
      </section>

      <aside class="tray">
        <div class="tray-title">
          <h2>기본 트레이</h2>
          <button type="button" class="pin" aria-label="고정"><svg viewBox="0 0 10 12"><path d="M2.500 1V6M7.500 1V6M2.500 1H7M0 6.500H10M5 7V11" stroke="#000" stroke-width="1.500" fill="none" /></svg></button>
          <button type="button" class="close" aria-label="닫기">×</button>
        </div>
        <div class="tray-body">
          <div class="panels">
            <div class="phead"><span class="tri"></span><h3>요소 정보</h3><button type="button" aria-label="닫기">×</button></div>
            <div class="info">
              <div class="info-top"><strong>433개 요소</strong><button type="button" class="toggle" aria-label="세부 정보"><svg viewBox="0 0 12 18"><rect x=".5" y=".5" width="11" height="17" fill="#fff" stroke="#999" /><path d="M2 2H10L6 6Z" /><rect y="8" width="12" height="10" /><path d="M6 10V16M3 13H9" stroke="#fff" stroke-width="1.500" /></svg></button></div>
              <div class="info-row">
                <button type="button" class="mat small" aria-label="재질"><i></i></button>
                <label for="layer">레이어(<u>L</u>):</label>
                <span class="combo layer"><select id="layer"><option>Layer0</option></select><i></i></span>
              </div>
            </div>
            <div class="phead"><span class="tri"></span><h3>재질</h3><button type="button" aria-label="닫기">×</button></div>
            <div class="material">
              <button type="button" class="mat big" aria-label="현재 재질"><i></i></button>
              <input type="text" class="name" value="기본값" disabled aria-label="재질 이름" />
              <div class="mat-actions">
                <button type="button" aria-label="보조 창"><svg width="12" height="18" viewBox="0 0 12 18"><rect x=".5" y=".5" width="11" height="17" fill="#fff" stroke="#999" /><rect width="12" height="10" /><path d="M3 5H9" stroke="#fff" stroke-width="1.500" /><path d="M2 16H10L6 12Z" /></svg></button>
                <button type="button" aria-label="재질 만들기"><svg width="24" height="24" viewBox="0 0 24 24"><path d="M4 6L14 1L22 5V15L12 22L4 18Z" fill="#1a1a1a" /><path d="M5 6L14 2L20 4L11 9Z" fill="#d6cf9e" stroke="#000" /><path d="M9 4L16 7" stroke="#000" stroke-width="1.600" /><path d="M13 13L21 8M13 17L21 12" stroke="#aaa" /><circle cx="7" cy="16" r="5.500" fill="#fff" stroke="#000" stroke-width="1.400" /><path d="M7 13V19M4 16H10" stroke="#000" stroke-width="1.400" /></svg></button>
                <button type="button" class="mini" aria-label="기본 재질"></button>
              </div>
            </div>
            <div class="tabs">
              <button type="button" class="tab on">선택</button><button type="button" class="tab">편집</button>
              <button type="button" class="dropper" aria-label="샘플 추출"><svg viewBox="0 0 20 20"><path d="M1 19L3 14L11 6L14 9L6 17Z" fill="#ddd" stroke="#222" /><path d="M1 19L3 14L6 12L8 15L5 18Z" fill="#e7b93c" /><path d="M10 5L12 3Q15-1 19 2T17 8L15 10Z" fill="#333" stroke="#111" /></svg></button>
            </div>
            <div class="nav">
              <button type="button" aria-label="뒤로"><svg width="16" height="16"><use href="#i-prev" /></svg></button>
              <button type="button" aria-label="앞으로"><svg width="16" height="16"><use href="#i-next" /></svg></button>
              <button type="button" aria-label="모델 안"><svg width="20" height="20"><use href="#i-home" /></svg></button>
              <span class="combo"><select aria-label="재질 모음"><option>색상</option></select><i></i></span>
              <button type="button" aria-label="세부 정보"><svg width="18" height="18"><use href="#i-detail" /></svg></button>
            </div>
            <div class="list main-list">
              <div class="grid"><button v-for="c in colors" :key="c" type="button" class="swatch" :style="{ backgroundColor: c }" :aria-label="c"></button></div>
              <div class="scroll"><svg><use href="#i-up" /></svg><i></i><svg class="end"><use href="#i-down" /></svg></div>
            </div>
            <div class="splitter"></div>
            <div class="subhead">선택</div>
            <div class="nav">
              <button type="button" aria-label="뒤로"><svg width="16" height="16"><use href="#i-prev" /></svg></button>
              <button type="button" aria-label="앞으로"><svg width="16" height="16"><use href="#i-next" /></svg></button>
              <button type="button" aria-label="모델 안"><svg width="20" height="20"><use href="#i-home" /></svg></button>
              <span class="combo lined"><select aria-label="보조 재질 모음"><option>재질</option></select><i></i></span>
              <button type="button" aria-label="세부 정보"><svg width="18" height="18"><use href="#i-detail" /></svg></button>
            </div>
            <div class="list sub-list">
              <div class="grid"><button v-for="n in 3" :key="n" type="button" class="swatch folder" aria-label="폴더"><svg><use href="#i-folder" /></svg></button></div>
              <div class="scroll"><svg><use href="#i-up" /></svg><i></i></div>
            </div>
          </div>
          <div class="scroll outer"><svg><use href="#i-up" /></svg><i></i><svg class="end"><use href="#i-down" /></svg></div>
        </div>
      </aside>

      <p class="caption"><span>대칭 이동 기준(Flip Along) - </span>LMClick -&gt; 대칭 이동 기준(Flip Along)</p>
    </main>

    <footer class="status">
      <svg viewBox="0 0 20 20"><circle cx="10" cy="10" r="8.500" fill="#f8f8f8" stroke="#aaa" stroke-width="1.300" /><path d="M10 4A3.500 3.500 0 0 1 12 10L10 16L8 10A3.500 3.500 0 0 1 10 4Z" fill="#aaa" /></svg>
      <svg viewBox="0 0 20 20"><circle cx="10" cy="10" r="8.500" fill="#fff" stroke="#111" stroke-width="1.600" /><circle cx="10" cy="5.500" r="2" /><path d="M7.500 8.500H12L11.500 15H8.500V10H7.500Z" /></svg>
      <svg viewBox="0 0 20 20"><circle cx="10" cy="10" r="8.500" fill="#ddd" stroke="#999" stroke-width="1.300" /><circle cx="10" cy="7.500" r="3.300" fill="#8d8d8d" /><path d="M4 16Q5 11.500 10 11.500T16 16Q10 20 4 16Z" fill="#8d8d8d" /></svg>
      <i></i>
      <span class="msg">이동할 두 점을 선택하십시오. Ctrl = 복사 토글, Alt = 자동 접기 토글, Shift를 누른 채로 선택 = 추정 잠금</span>
      <i></i>
      <label for="vcb">거리</label>
      <input id="vcb" type="text" />
    </footer>
  </div>
</template>

<style>
body {
  background: #fff;
}
</style>

<style scoped>
.app {
  box-sizing: border-box;
  display: flex;
  flex-direction: column;
  height: 100vh;
  padding: 40px 0 42px;
  font: 15px/20px 'Noto Sans CJK KR', 'Noto Sans', sans-serif;
  color: #111;
}
.app *,
.app *::before,
.app *::after {
  box-sizing: border-box;
}
.symbols {
  display: none;
}
button {
  padding: 0;
  border: 0;
  background: none;
  font: inherit;
  color: inherit;
}
h2,
h3,
p {
  margin: 0;
  font-weight: 400;
}
.menubar {
  display: flex;
  gap: 17px;
  height: 24px;
  padding: 2px 7px;
  flex: none;
  font-size: 15px;
}
.toolbar {
  display: flex;
  align-items: center;
  height: 48px;
  padding-top: 2px;
  flex: none;
  background: #f3f3f3;
  border-bottom: 1px solid #a5a9ab;
}
.tool {
  display: flex;
  align-items: center;
  justify-content: center;
  width: 42px;
  height: 42px;
  flex: none;
}
.tool svg {
  width: 32px;
  height: 32px;
  overflow: visible;
}
.tool.active {
  background: #c7def5;
  border: 1px solid #90c8f6;
}
.tool.split {
  margin-left: 3px;
}
.drop {
  display: flex;
  justify-content: center;
  width: 19px;
  padding-bottom: 5px;
  flex: none;
}
.drop::before {
  content: '';
  border: 6px solid transparent;
  border-top: 7px solid #000;
  border-bottom: 0;
}
.vsep {
  width: 8px;
  height: 38px;
  flex: none;
  background: linear-gradient(#777, #777) 3px 0 / 1px 100% no-repeat;
}
.grip,
.band {
  height: 44px;
  flex: none;
  background: radial-gradient(#aaa 1px, transparent 1px) 50% 0 / 4px 5px repeat-y;
}
.grip {
  width: 9px;
}
.band {
  width: 13px;
  height: 46px;
  background: linear-gradient(#aaa, #aaa) 2px 0 / 1px 100% no-repeat, radial-gradient(#aaa 1px, transparent 1px) 6px 0 / 4px 5px repeat-y;
}
.dial {
  width: 146px;
  margin: 4px 11px 0 4px;
  flex: none;
}
.range {
  display: block;
  width: 100%;
  height: 13px;
  margin: 0;
  appearance: none;
  background: none;
}
.range::-webkit-slider-runnable-track {
  height: 9px;
  border: 1px solid #ddd;
  border-top: 2px solid #888;
  border-left: 2px solid #888;
}
.year::-webkit-slider-runnable-track {
  background: linear-gradient(90deg, #fffdf8, #f8dc90 20%, #f0b820 35%, #e86020 52%, #e01010 68%, #f07878 84%, #fdeaea);
}
.day::-webkit-slider-runnable-track {
  background: linear-gradient(90deg, #fafcff, #9dbbdc 32%, #5f7fe0 58%, #5464e8 70%, #1a1a40 90%, #000);
}
.range::-webkit-slider-thumb {
  width: 5px;
  height: 13px;
  margin-top: -3px;
  appearance: none;
  background: #fbfbfb;
  border: 1px solid #bbb;
}
.ticks {
  display: flex;
  justify-content: space-between;
  padding: 0 3px;
  font: 10px/12px 'Liberation Sans', 'Noto Sans CJK KR', sans-serif;
  color: #000;
}
.ticks.hours {
  padding: 0;
}
.work {
  position: relative;
  display: flex;
  flex: 1;
  min-height: 0;
}
.side {
  width: 88px;
  flex: none;
  background: #f1f1f1;
}
.palette {
  height: 807px;
  border-right: 1px solid #bbb;
  border-bottom: 1px solid #aaa;
  background: #f3f3f3;
}
.hgrip {
  display: block;
  height: 10px;
  background: radial-gradient(#aaa 1px, transparent 1px) 0 50% / 5px 4px repeat-x;
}
.sgroup {
  display: flex;
  flex-wrap: wrap;
  width: 88px;
  padding: 0 2px;
}
.sgroup + .sgroup::before {
  content: '';
  width: 80px;
  height: 8px;
  margin-left: 2px;
  background: linear-gradient(#888, #888) 0 2px / 100% 1px no-repeat;
}
.stage {
  position: relative;
  flex: 1;
  min-width: 0;
  border: solid #777;
  border-width: 2px 0 0 2px;
  border-bottom: 1px solid #eee;
}
.scene {
  display: block;
  width: 100%;
  height: 100%;
}
.keys {
  position: absolute;
  right: 15px;
  bottom: 7px;
  display: flex;
  flex-direction: column;
  align-items: flex-start;
  gap: 26px;
}
.key {
  height: 46px;
  padding: 0 6px;
  border-radius: 5px;
  background: #898989;
  box-shadow: 0 0 4px #999;
  color: #fff;
  font: bold 29px/42px 'DejaVu Sans', sans-serif;
  text-shadow: 1px 2px 2px #555;
  -webkit-text-stroke: 1px #fff;
}
.caption {
  position: absolute;
  left: 0;
  bottom: 0;
  display: flex;
  align-items: center;
  width: 1310px;
  height: 72px;
  padding-left: 94px;
  background: rgba(60, 60, 60, 0.6);
  color: #f0f0f0;
  font-size: 41px;
  font-weight: 300;
  line-height: 60px;
  white-space: pre;
}
.caption span {
  padding-right: 16px;
  font-size: 46px;
}
.tray {
  display: flex;
  flex-direction: column;
  width: 302px;
  flex: none;
  border-left: 6px solid #f3f3f3;
  background: #f1f1f1;
}
.tray-title {
  display: flex;
  align-items: center;
  height: 27px;
  padding: 0 4px 2px 5px;
  flex: none;
  background: linear-gradient(#c3d0e0, #d6e2f0);
}
.tray-title h2 {
  flex: 1;
  font-size: 15px;
}
.pin svg {
  display: block;
  width: 8px;
  height: 9px;
  margin-right: 9px;
}
.close {
  width: 12px;
  height: 12px;
  background: #c25056;
  color: #fff;
  font-size: 12px;
  line-height: 11px;
}
.tray-body {
  display: flex;
  flex: 1;
  min-height: 0;
  padding-top: 2px;
}
.panels {
  display: flex;
  flex-direction: column;
  flex: 1;
  min-width: 0;
  min-height: 0;
  border-right: 1px solid #fff;
}
.phead {
  display: flex;
  align-items: center;
  height: 23px;
  padding: 0 3px 2px 10px;
  flex: none;
  border-bottom: 1px solid #aaa;
  background: linear-gradient(#f2f2f2, #b4b4b4);
}
.phead h3 {
  flex: 1;
  margin-left: 7px;
  font-size: 16px;
}
.phead button {
  width: 16px;
  height: 16px;
  border: 1px solid #999;
  background: #e8e8e8;
  font-size: 12px;
  line-height: 14px;
}
.tri {
  border: 5px solid transparent;
  border-top: 9px solid #000;
  border-bottom: 0;
}
.info {
  height: 180px;
  padding: 0 7px 0 2px;
  flex: none;
}
.info-top {
  display: flex;
  align-items: center;
  justify-content: space-between;
  width: 265px;
  height: 30px;
  padding-left: 9px;
  background: linear-gradient(#999, #999) 0 100% / 245px 1px no-repeat;
  font-size: 13px;
}
.toggle svg {
  display: block;
  width: 12px;
  height: 18px;
}
.info-row {
  display: flex;
  align-items: flex-start;
  padding: 9px 4px 0 11px;
  font-size: 13px;
}
.info-row label {
  flex: 1;
  padding-right: 3px;
  line-height: 22px;
  text-align: right;
}
.mat {
  display: block;
  flex: none;
  border: 1px solid #999;
}
.mat i {
  display: block;
  background: linear-gradient(to top right, #a5b2bb 50%, #fff 50%);
}
.mat.small {
  width: 53px;
  height: 60px;
  padding: 3px 0 4px;
}
.mat.small i {
  height: 51px;
}
.mat.big {
  width: 77px;
  height: 87px;
  padding: 5px 0;
}
.mat.big i {
  height: 75px;
}
.combo {
  display: flex;
  height: 25px;
  flex: 1;
  border: 1px solid #eee;
  border-top: 2px solid #777;
  border-left: 2px solid #777;
  background: #fff;
}
.combo.layer {
  width: 118px;
  height: 23px;
  flex: none;
}
.combo select {
  flex: 1;
  min-width: 0;
  padding: 0 3px;
  border: 0;
  background: none;
  appearance: none;
  font: 12px/20px 'Noto Sans CJK KR', sans-serif;
  color: #000;
}
.combo.layer select {
  padding: 0 2px;
  font: 13px/18px 'Noto Sans', sans-serif;
}
.combo.lined select {
  margin: 0 4px 1px 3px;
  padding: 0;
  border-bottom: 1px solid #000;
}
.combo i {
  display: flex;
  align-items: center;
  justify-content: center;
  width: 21px;
  border: solid #777;
  border-width: 0 1px 1px 0;
  border-left: 1px solid #ddd;
  background: #f1f1f1;
}
.combo i::before {
  content: '';
  border: 5px solid transparent;
  border-top: 5px solid #000;
  border-bottom: 0;
}
.material {
  display: flex;
  align-items: flex-start;
  gap: 3px;
  height: 93px;
  padding: 2px 2px 0;
  flex: none;
  border-bottom: 1px solid #999;
}
.name {
  width: 160px;
  height: 23px;
  padding: 0 3px;
  border: 1px solid #fff;
  border-top: 2px solid #888;
  border-left: 2px solid #888;
  background: #f1f1f1;
  color: #888;
  font: 12px/18px 'Noto Sans CJK KR', sans-serif;
}
.mat-actions {
  display: flex;
  flex-direction: column;
  align-items: center;
  gap: 7px;
  flex: 1;
  padding-top: 4px;
}
.mat-actions button,
.mat-actions svg {
  display: block;
}
.mini {
  width: 26px;
  height: 26px;
  background: linear-gradient(to top right, #a5b2bb 50%, #fff 50%);
}
.tabs {
  display: flex;
  align-items: flex-end;
  height: 30px;
  flex: none;
  font-size: 12px;
}
.tab {
  width: 46px;
  height: 20px;
  border: 1px solid #fff;
  border-right: 2px solid #777;
  border-bottom: 0;
  text-align: left;
  padding-left: 4px;
}
.tab.on {
  width: 51px;
  height: 22px;
  padding: 0 0 3px 6px;
}
.dropper {
  margin: 0 5px 4px auto;
}
.dropper svg {
  display: block;
  width: 20px;
  height: 20px;
}
.nav {
  display: flex;
  align-items: center;
  gap: 8px;
  height: 36px;
  padding: 0 4px 2px 8px;
  flex: none;
  border-bottom: 1px solid #999;
}
.nav button:nth-child(2) {
  margin-left: 4px;
}
.nav button:nth-child(3) {
  margin-left: 2px;
}
.nav svg {
  display: block;
}
.nav .combo {
  margin-left: -2px;
}
.list {
  display: flex;
  overflow: hidden;
  background: #fff;
}
.main-list {
  flex: 1;
  min-height: 0;
}
.sub-list {
  height: 33px;
  flex: none;
}
.grid {
  display: grid;
  grid-template-columns: repeat(3, 62px);
  grid-auto-rows: 62px;
  gap: 2px;
  flex: 1;
  padding: 2px 0 0 3px;
}
.swatch {
  padding: 1px;
  border: 1px solid #999;
  background-clip: content-box;
  box-shadow: inset 0 0 0 1px #fff;
}
.folder {
  display: flex;
  align-items: flex-start;
  justify-content: center;
  padding-top: 10px;
}
.folder svg {
  width: 40px;
  height: 40px;
}
.scroll {
  display: flex;
  flex-direction: column;
  align-items: center;
  width: 19px;
  flex: none;
  background: #f1f1f1;
}
.scroll svg {
  width: 12px;
  height: 12px;
  margin: 5px 0 4px;
  flex: none;
}
.scroll i {
  width: 19px;
  height: 21px;
  background: #cdcdcd;
}
.scroll .end {
  margin-top: auto;
}
.outer {
  width: 20px;
}
.splitter {
  height: 10px;
  flex: none;
  border-bottom: 1px solid #999;
  background: linear-gradient(#777, #777) 0 3px / 100% 2px no-repeat;
}
.subhead {
  height: 22px;
  padding-left: 4px;
  flex: none;
  border-bottom: 1px solid #999;
  background: #e5e5e5;
  font-size: 12px;
  line-height: 18px;
}
.status {
  display: flex;
  align-items: center;
  height: 29px;
  padding: 2px 5px 0 6px;
  flex: none;
  background: #f1f1f1;
}
.status svg {
  width: 20px;
  height: 20px;
  margin-right: 15px;
}
.status i {
  width: 1px;
  height: 15px;
  background: #999;
}
.status svg + i {
  margin-left: -3px;
}
.status .msg {
  flex: 1;
  margin-left: 10px;
  font-size: 17px;
  white-space: nowrap;
}
.status label {
  margin: 0 9px;
  font-size: 17px;
}
.status input {
  width: 250px;
  height: 24px;
  margin-top: 3px;
  border: 1px solid #b0bccb;
  background: #fff;
}
</style>
